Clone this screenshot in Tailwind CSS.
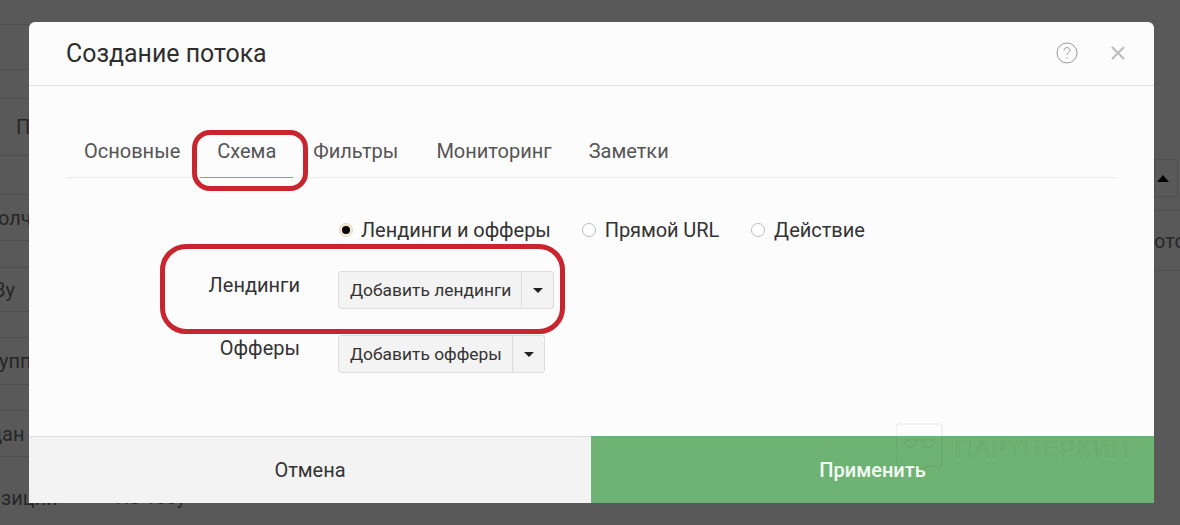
<!DOCTYPE html>
<html lang="en">
<head>
  <meta charset="UTF-8" />
  <title>Создание потока</title>
  <script src="https://cdn.jsdelivr.net/npm/@tailwindcss/browser@4"></script>
</head>
<body class="bg-[#595959] font-['Roboto',sans-serif] overflow-hidden">
  <div class="relative w-[1180px] h-[525px] overflow-hidden">

    <!-- page behind the overlay -->
    <div class="flex justify-between text-[20px] text-[#262626]">
      <div class="w-[580px] flex flex-col">
        <div class="h-[25px] border-b border-[#4e4e4e]"></div>
        <div class="h-[45px] border-b border-[#4e4e4e]"></div>
        <div class="h-[29px] border-b border-[#4e4e4e]"></div>
        <div class="h-[57px] border-b border-[#4e4e4e] pl-[16px] flex items-center">П</div>
        <div class="h-[39px] border-b border-[#4e4e4e]"></div>
        <div class="h-[46px] border-b border-[#4e4e4e] -ml-[2px] flex items-center">олч</div>
        <div class="h-[27px] border-b border-[#4e4e4e]"></div>
        <div class="h-[44px] border-b border-[#4e4e4e] -ml-[7px] flex items-center">Ву</div>
        <div class="h-[26px] border-b border-[#4e4e4e]"></div>
        <div class="h-[47px] border-b border-[#4e4e4e] -ml-[1px] flex items-center">упп</div>
        <div class="h-[26px] border-b border-[#4e4e4e]"></div>
        <div class="h-[46px] border-b border-[#4e4e4e] -ml-[10px] flex items-center">дан</div>
        <div class="h-[68px] ml-[1px] pt-[30px] flex items-start leading-[22px]">
          <span>зиции</span>
          <span class="w-[10px] h-[10px] rounded-full bg-[#4e4e4e] ml-[40px] mt-[6px]"></span>
          <span class="ml-[8px] text-[19px]">По 100у</span>
        </div>
      </div>
      <div class="w-[26px] flex flex-col">
        <div class="h-[159px]"></div>
        <div class="h-[38px] w-[24px] border border-[#4e4e4e] rounded-r-[3px] flex items-center pl-[2px]">
          <span class="w-0 h-0 border-x-[6px] border-x-transparent border-b-[7px] border-b-black"></span>
        </div>
        <div class="h-[14px] border-b border-[#4e4e4e]"></div>
        <div class="h-[60px] border-b border-[#4e4e4e] flex items-center whitespace-nowrap">ото</div>
      </div>
    </div>

    <!-- modal -->
    <div class="absolute left-[29px] top-[22px] w-[1125px] h-[481px] bg-[#fcfcfc] rounded-t-[6px] flex flex-col">
      <div class="h-[64px] shrink-0 border-b border-[#e2e2e2] pl-[37px] pr-[28px] flex items-center justify-between">
        <h1 class="text-[24.9px] text-[#2e2e2e]">Создание потока</h1>
        <div class="flex items-center gap-[32px] -mt-[2px]">
          <svg width="22" height="22" viewBox="0 0 22 22" fill="none" stroke="#999" stroke-width="1">
            <circle cx="11" cy="11" r="10"/>
            <path d="M8 8.6c0-1.9 1.4-3 3-3s3 1.1 3 2.7c0 2.2-3 2.400-3 4.700"/>
            <path d="M11 15.200v1.500"/>
          </svg>
          <svg width="16" height="16" viewBox="0 0 16 16" fill="none" stroke="#bdbdbd" stroke-width="2.200">
            <path d="M2 2l12 12M14 2L2 14"/>
          </svg>
        </div>
      </div>

      <div class="flex-1 px-[37px] pt-[39px]">
        <div class="relative flex h-[53px] border-b border-[#ececec] text-[20px] text-[#555]">
          <a class="pl-[18px] pr-[20px] pt-[11px]">Основные</a>
          <a class="relative w-[93px] text-center pt-[11px]">Схема<span class="absolute left-0 right-0 -bottom-[1px] h-[1px] bg-[#6fb374]"></span></a>
          <a class="pl-[20px] pr-[19px] pt-[11px]">Фильтры</a>
          <a class="px-[19px] pt-[11px]">Мониторинг</a>
          <a class="px-[18px] pt-[11px]">Заметки</a>
        </div>

        <div class="flex items-center h-[24px] mt-[40px] ml-[273px] text-[20px] text-[#333]">
          <span class="w-[14px] h-[14px] rounded-full bg-[#f8eccb] border border-[#d8d8d8] flex items-center justify-center">
            <span class="w-[8px] h-[8px] rounded-full bg-black"></span>
          </span>
          <span class="ml-[8px] tracking-[-0.05px]">Лендинги и офферы</span>
          <span class="w-[14px] h-[14px] rounded-full bg-white border border-[#bbb] ml-[31px]"></span>
          <span class="ml-[9px] tracking-[-0.1px]">Прямой URL</span>
          <span class="w-[14px] h-[14px] rounded-full bg-white border border-[#bbb] ml-[32px]"></span>
          <span class="ml-[9px]">Действие</span>
        </div>

        <div class="flex mt-[29px] h-[38px] text-[#333]">
          <label class="w-[234px] text-right text-[20px] leading-[28px]">Лендинги</label>
          <div class="ml-[38px] flex h-[38px] bg-[#f3f3f3] border border-[#dcdcdc] rounded-[3px] text-[17.4px] items-center">
            <span class="w-[183px] pl-[11px] whitespace-nowrap border-r border-[#dcdcdc] leading-[36px]">Добавить лендинги</span>
            <span class="w-[31px] flex justify-center"><span class="w-0 h-0 border-x-[5px] border-x-transparent border-t-[5px] border-t-[#222]"></span></span>
          </div>
        </div>

        <div class="flex mt-[26px] h-[38px] text-[#333]">
          <label class="w-[234px] text-right text-[20px] leading-[26px]">Офферы</label>
          <div class="ml-[38px] flex h-[38px] bg-[#f3f3f3] border border-[#dcdcdc] rounded-[3px] text-[17.4px] items-center">
            <span class="w-[174px] pl-[11px] whitespace-nowrap border-r border-[#dcdcdc] leading-[36px]">Добавить офферы</span>
            <span class="w-[31px] flex justify-center"><span class="w-0 h-0 border-x-[5px] border-x-transparent border-t-[5px] border-t-[#222]"></span></span>
          </div>
        </div>
      </div>

      <div class="h-[67px] shrink-0 flex text-[20px]">
        <button class="w-[562px] bg-[#f3f3f3] border-t border-[#dcdcdc] text-[#333]">Отмена</button>
        <button class="w-[563px] bg-[#6fb374] text-[#f4fbf4] font-medium">Применить</button>
      </div>
    </div>

    <!-- red annotations on top of the screenshot -->
    <div class="absolute left-[192px] top-[130px] w-[116px] h-[61px] border-[5px] border-[#c9252f] rounded-[18px]"></div>
    <div class="absolute left-[160px] top-[244px] w-[405px] h-[90px] border-[5px] border-[#c9252f] rounded-[26px]"></div>

    <!-- watermark -->
    <div class="absolute left-[896px] top-[423px] flex items-center">
      <svg width="47" height="52" viewBox="0 0 47 52" fill="none" stroke="#000" stroke-opacity="0.08" stroke-width="1.200">
        <path d="M3 1h40a3 3 0 0 1 3 3v36a3 3 0 0 1-3 3H31l-7 7v-7H3a3 3 0 0 1-3-3V4a3 3 0 0 1 3-3z"/>
        <path d="M7 17h33M9 18c0 9 11 9 11-1M27 17c0 10 11 10 11 0"/>
      </svg>
      <span class="ml-[12px] text-[24px] tracking-[1.4px] text-transparent [-webkit-text-stroke:0.7px_rgba(0,0,0,0.1)] font-['Liberation_Sans',sans-serif]">ПАРТНЕРКИН</span>
    </div>
  </div>
</body>
</html>
